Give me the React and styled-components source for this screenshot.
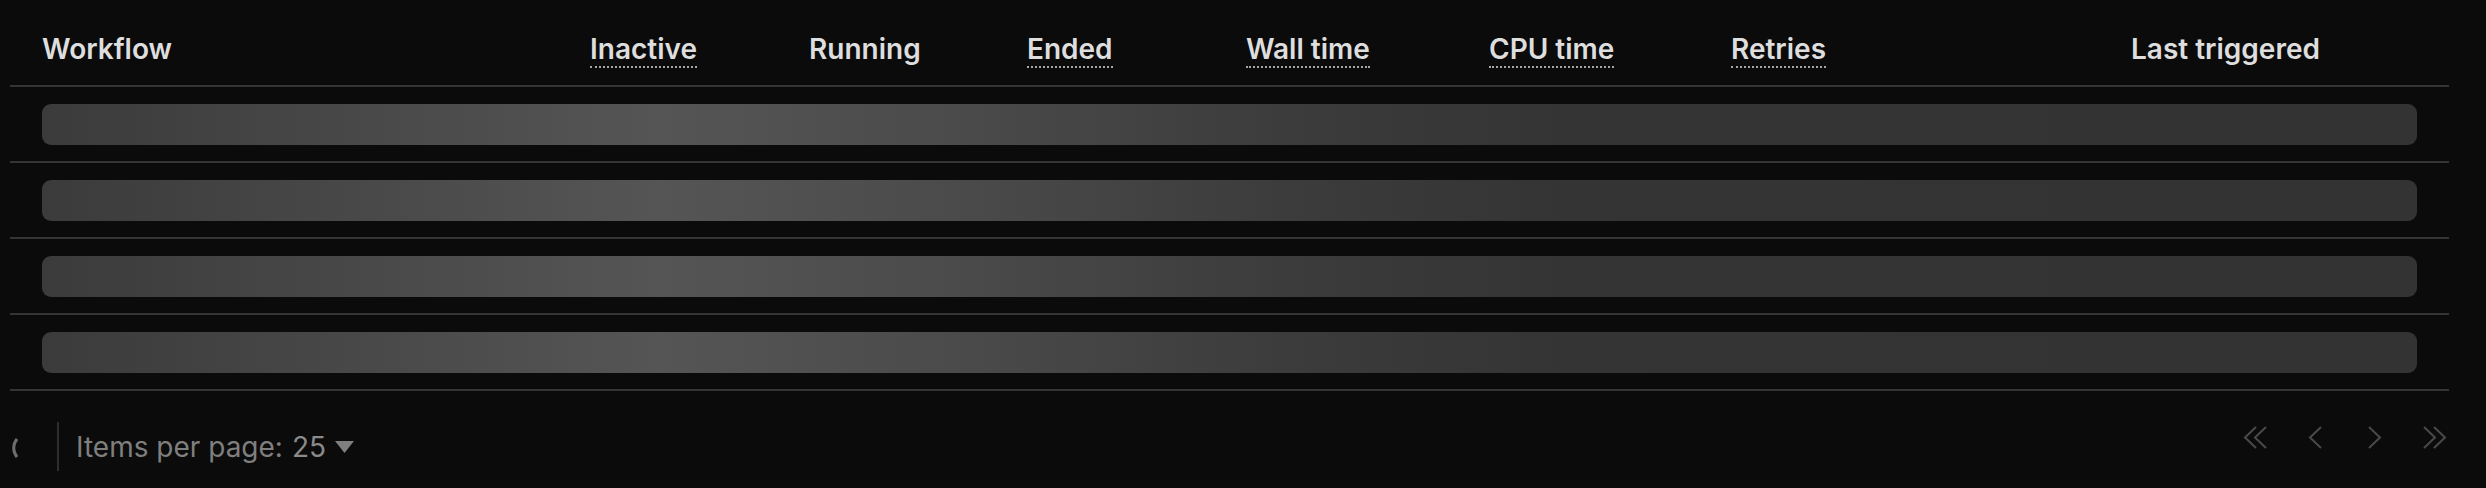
import React from "react";
import styled, { createGlobalStyle } from "styled-components";

const GlobalStyle = createGlobalStyle`
  html, body {
    margin: 0;
    padding: 0;
    background: #0b0b0b;
  }
  body {
    font-family: Inter, "Noto Sans", "Liberation Sans", sans-serif;
    color: #e0e0e0;
  }
`;

const COLUMNS = "548px 219px 218px 219px 243px 242px 400px 1fr";

const Page = styled.div`
  width: 2486px;
  height: 488px;
  overflow: hidden;
  background: #0b0b0b;
`;

const Table = styled.div`
  margin-left: 10px;
  width: 2439px;
`;

const HeaderRow = styled.div`
  display: grid;
  grid-template-columns: ${COLUMNS};
  height: 85px;
  border-bottom: 2px solid #353535;
`;

const HeaderCell = styled.div`
  padding: 32px 0 0 32px;
`;

const HeaderLabel = styled.span`
  display: inline-block;
  font-size: 28px;
  line-height: 34px;
  font-weight: 600;
  color: #dedede;
  white-space: nowrap;
  border-bottom: 2px dotted ${({ $tip }) => ($tip ? "#a6a6a6" : "transparent")};
`;

const Row = styled.div`
  display: flex;
  align-items: center;
  height: 74px;
  padding: 0 32px;
  border-bottom: 2px solid #353535;
`;

// frozen shimmer of the loading skeleton
const SkeletonBar = styled.div`
  flex: 1;
  height: 41px;
  border-radius: 9px;
  background: linear-gradient(
    90deg,
    #3b3b3b 0%,
    #454545 10%,
    #555555 26%,
    #4b4b4b 38%,
    #3c3c3c 52%,
    #343434 64%,
    #333333 100%
  );
`;

const Footer = styled.div`
  display: flex;
  justify-content: space-between;
  align-items: flex-start;
  padding: 31px 27px 0 10px;
`;

const PageSize = styled.div`
  display: flex;
  align-items: center;
  height: 49px;
  font-size: 28px;
  color: #7f7f7f;
`;

const Spinner = styled.svg`
  width: 8px;
  height: 20px;
  margin-top: 2px;
`;

const Divider = styled.div`
  width: 2px;
  height: 49px;
  background: #2e2e2e;
  margin: 0 17px 0 39px;
`;

const Label = styled.span`
  white-space: nowrap;
`;

const Count = styled.span`
  margin-left: 9px;
  color: #8a8a8a;
`;

const Caret = styled.svg`
  width: 19px;
  height: 12px;
  margin-left: 9px;
`;

const Pager = styled.div`
  display: flex;
  gap: 12px;
  margin-top: 4px;
`;

const PagerButton = styled.button`
  width: 48px;
  height: 23px;
  padding: 0;
  border: none;
  background: none;
  display: flex;
  justify-content: center;
  align-items: center;
  color: #4a4a4a;
`;

const headers = [
  { label: "Workflow" },
  { label: "Inactive", tip: true },
  { label: "Running" },
  { label: "Ended", tip: true },
  { label: "Wall time", tip: true },
  { label: "CPU time", tip: true },
  { label: "Retries", tip: true },
  { label: "Last triggered" },
];

const Chevron = ({ dir, double }) => {
  const w = double ? 24 : 14;
  return (
    <svg width={w} height="23" viewBox={`0 0 ${w} 23`}>
      <g
        transform={dir === "right" ? `scale(-1,1) translate(-${w},0)` : undefined}
        fill="none"
        stroke="currentColor"
        strokeWidth="2"
      >
        <polyline points="13,1 2,11.5 13,22" />
        {double && <polyline points="23,1 12,11.5 23,22" />}
      </g>
    </svg>
  );
};

export default function App() {
  return (
    <Page>
      <GlobalStyle />
      <Table>
        <HeaderRow>
          {headers.map((h) => (
            <HeaderCell key={h.label}>
              <HeaderLabel $tip={h.tip}>{h.label}</HeaderLabel>
            </HeaderCell>
          ))}
        </HeaderRow>
        {[0, 1, 2, 3].map((i) => (
          <Row key={i}>
            <SkeletonBar />
          </Row>
        ))}
      </Table>
      <Footer>
        <PageSize>
          <Spinner viewBox="0 0 8 20">
            <path d="M7 1 A 14 14 0 0 0 7 19" fill="none" stroke="#6e6e6e" strokeWidth="3" />
          </Spinner>
          <Divider />
          <Label>Items per page:</Label>
          <Count>25</Count>
          <Caret viewBox="0 0 19 12">
            <polygon points="0,0 19,0 9.5,12" fill="#7f7f7f" />
          </Caret>
        </PageSize>
        <Pager>
          <PagerButton><Chevron dir="left" double /></PagerButton>
          <PagerButton><Chevron dir="left" /></PagerButton>
          <PagerButton><Chevron dir="right" /></PagerButton>
          <PagerButton><Chevron dir="right" double /></PagerButton>
        </Pager>
      </Footer>
    </Page>
  );
}
